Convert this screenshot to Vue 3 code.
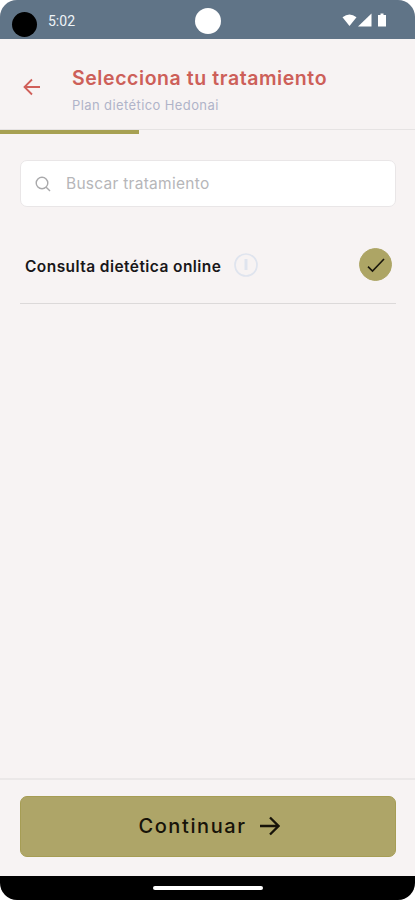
<script setup>
import { ref, computed } from 'vue'

const search = ref('')
const selected = ref('online')
const step = 1
const totalSteps = 3

const treatments = [
  { id: 'online', name: 'Consulta dietética online' },
]

const filtered = computed(() =>
  treatments.filter(t => t.name.toLowerCase().includes(search.value.toLowerCase()))
)

const progress = computed(() => `${(step / totalSteps) * 100 + 0.2}%`)
</script>

<template>
  <div class="screen">
    <div class="status">
      <span class="status__dot" />
      <span class="status__time">5:02</span>
      <span class="status__camera" />
      <svg class="status__icons" width="46" height="16" viewBox="0 0 46 16">
        <path d="M0.5 4.2Q7.5 -1.2 14.5 4.2L7.5 13Z" />
        <path d="M29.5 0.5V13.5H16Z" />
        <path d="M38.5 0.5h3v1.5h2.5v11.5h-8V2h2.5z" />
      </svg>
    </div>

    <header class="header">
      <button class="header__back" aria-label="Volver">
        <svg width="18" height="18" viewBox="0 0 18 18">
          <path d="M17 9H1.5M9 1.5L1.5 9L9 16.5" />
        </svg>
      </button>
      <div class="header__text">
        <h1 class="header__title">Selecciona tu tratamiento</h1>
        <p class="header__subtitle">Plan dietético Hedonai</p>
      </div>
    </header>
    <div class="progress">
      <div class="progress__bar" :style="{ width: progress }" />
    </div>

    <main class="content">
      <label class="search">
        <svg width="16" height="16" viewBox="0 0 16 16">
          <circle cx="7" cy="7" r="5.8" />
          <path d="M11.2 11.2L15 15" />
        </svg>
        <input v-model="search" class="search__input" type="text" placeholder="Buscar tratamiento">
      </label>

      <ul class="list">
        <li v-for="t in filtered" :key="t.id" class="item" @click="selected = t.id">
          <span class="item__name">{{ t.name }}</span>
          <svg class="item__info" width="24" height="24" viewBox="0 0 24 24">
            <circle cx="12" cy="12" r="11" />
            <path d="M12 6v11" />
          </svg>
          <span class="item__check" :class="{ 'item__check--on': selected === t.id }">
            <svg v-if="selected === t.id" width="18" height="16" viewBox="0 0 18 16">
              <path d="M1 9.6L5.5 14L17 2" />
            </svg>
          </span>
        </li>
      </ul>
    </main>

    <footer class="footer">
      <button class="next">
        <span class="next__label">Continuar</span>
        <svg width="21" height="20" viewBox="0 0 21 20">
          <path d="M1 10H19.5M11 1.5L19.5 10L11 18.5" />
        </svg>
      </button>
    </footer>
    <div class="nav"><span class="nav__pill" /></div>
  </div>
</template>

<style>
body {
  background: #fff;
}
</style>

<style scoped>
.screen {
  display: flex;
  flex-direction: column;
  width: 415px;
  height: 900px;
  overflow: hidden;
  border-radius: 17px;
  background: #f7f3f3;
  font-family: Inter, "Open Sans", sans-serif;
}

/* Status bar */
.status {
  position: relative;
  display: flex;
  align-items: center;
  flex-shrink: 0;
  box-sizing: border-box;
  height: 39px;
  padding: 0 27px 0 12px;
  background: #607487;
}
.status__dot {
  width: 25px;
  height: 25px;
  margin-top: 9px;
  border-radius: 50%;
  background: #000;
}
.status__time {
  margin: 2px 0 0 11px;
  color: #eef3f7;
  font-family: Roboto, sans-serif;
  font-size: 14px;
  font-weight: 400;
}
.status__camera {
  position: absolute;
  left: 195px;
  top: 8px;
  width: 26px;
  height: 26px;
  border-radius: 50%;
  background: #fff;
}
.status__icons {
  margin: 2px 0 0 auto;
  fill: #fff;
}

/* Header */
.header {
  display: flex;
  flex-shrink: 0;
  box-sizing: border-box;
  height: 90px;
  padding: 26px 22px 0;
}
.header__back {
  width: 50px;
  height: 40px;
  padding: 7px 0 0 1px;
  border: 0;
  background: none;
  text-align: left;
}
.header__back path {
  fill: none;
  stroke: #d0605a;
  stroke-width: 1.8;
}
.header__title {
  margin: 0;
  color: #cd5f59;
  font-size: 19.5px;
  font-weight: 600;
  line-height: 26px;
  letter-spacing: 0.57px;
  white-space: nowrap;
}
.header__subtitle {
  margin: 4px 0 0;
  color: #b0b3c9;
  font-size: 13px;
  line-height: 20px;
  letter-spacing: 0.4px;
}
.progress {
  flex-shrink: 0;
  height: 5px;
  border-top: 1px solid #e6e3e3;
}
.progress__bar {
  height: 4px;
  background: #a7a052;
}

/* Content */
.content {
  flex: 1;
  padding: 25px 19px 0 20px;
}
.search {
  display: flex;
  align-items: center;
  box-sizing: border-box;
  height: 47px;
  padding: 0 14px;
  border: 1px solid #e9e6e7;
  border-radius: 7px;
  background: #fff;
}
.search svg {
  fill: none;
  stroke: #a9a9ab;
  stroke-width: 1.4;
}
.search__input {
  flex: 1;
  margin: 0 0 1px 15px;
  padding: 0;
  border: 0;
  outline: 0;
  background: none;
  font: 400 15.5px Inter, sans-serif;
  letter-spacing: 0.27px;
}
.search__input::placeholder {
  color: #b6b6b9;
}
.list {
  margin: 20px 0 0;
  padding: 0;
  list-style: none;
}
.item {
  display: flex;
  align-items: center;
  box-sizing: border-box;
  height: 77px;
  padding: 0 4px 0 5px;
  border-bottom: 1px solid #dcd9d9;
}
.item__name {
  width: 196px;
  margin-top: 2px;
  color: #191719;
  font-size: 15.5px;
  font-weight: 600;
  letter-spacing: 0.43px;
  white-space: nowrap;
}
.item__info {
  margin-left: 13px;
  fill: none;
  stroke: #dfe4ee;
  stroke-width: 1.7;
}
.item__info path {
  stroke-width: 3;
}
.item__check {
  display: flex;
  align-items: center;
  justify-content: center;
  box-sizing: border-box;
  width: 33px;
  height: 33px;
  margin: -1px 0 0 auto;
  border: 1px solid #ada565;
  border-radius: 50%;
}
.item__check--on {
  background: #ada565;
}
.item__check path {
  fill: none;
  stroke: #1a170c;
  stroke-width: 1.6;
}

/* Footer */
.footer {
  flex-shrink: 0;
  box-sizing: border-box;
  height: 98px;
  padding: 16px 19px 0 20px;
  border-top: 2px solid #ebe8e8;
}
.next {
  display: flex;
  align-items: center;
  justify-content: center;
  gap: 12px;
  width: 100%;
  height: 61px;
  padding: 0 0 1px 2px;
  border: 1px solid #a69d54;
  border-radius: 7px;
  background: #aea568;
  color: #171309;
  font-family: inherit;
}
.next__label {
  font-size: 20px;
  font-weight: 500;
  letter-spacing: 1.6px;
}
.next path {
  fill: none;
  stroke: #171309;
  stroke-width: 2.3;
}
.nav {
  display: flex;
  justify-content: center;
  flex-shrink: 0;
  box-sizing: border-box;
  height: 24px;
  padding-top: 10px;
  background: #000;
}
.nav__pill {
  width: 110px;
  height: 4px;
  border-radius: 2px;
  background: #fff;
}
</style>
